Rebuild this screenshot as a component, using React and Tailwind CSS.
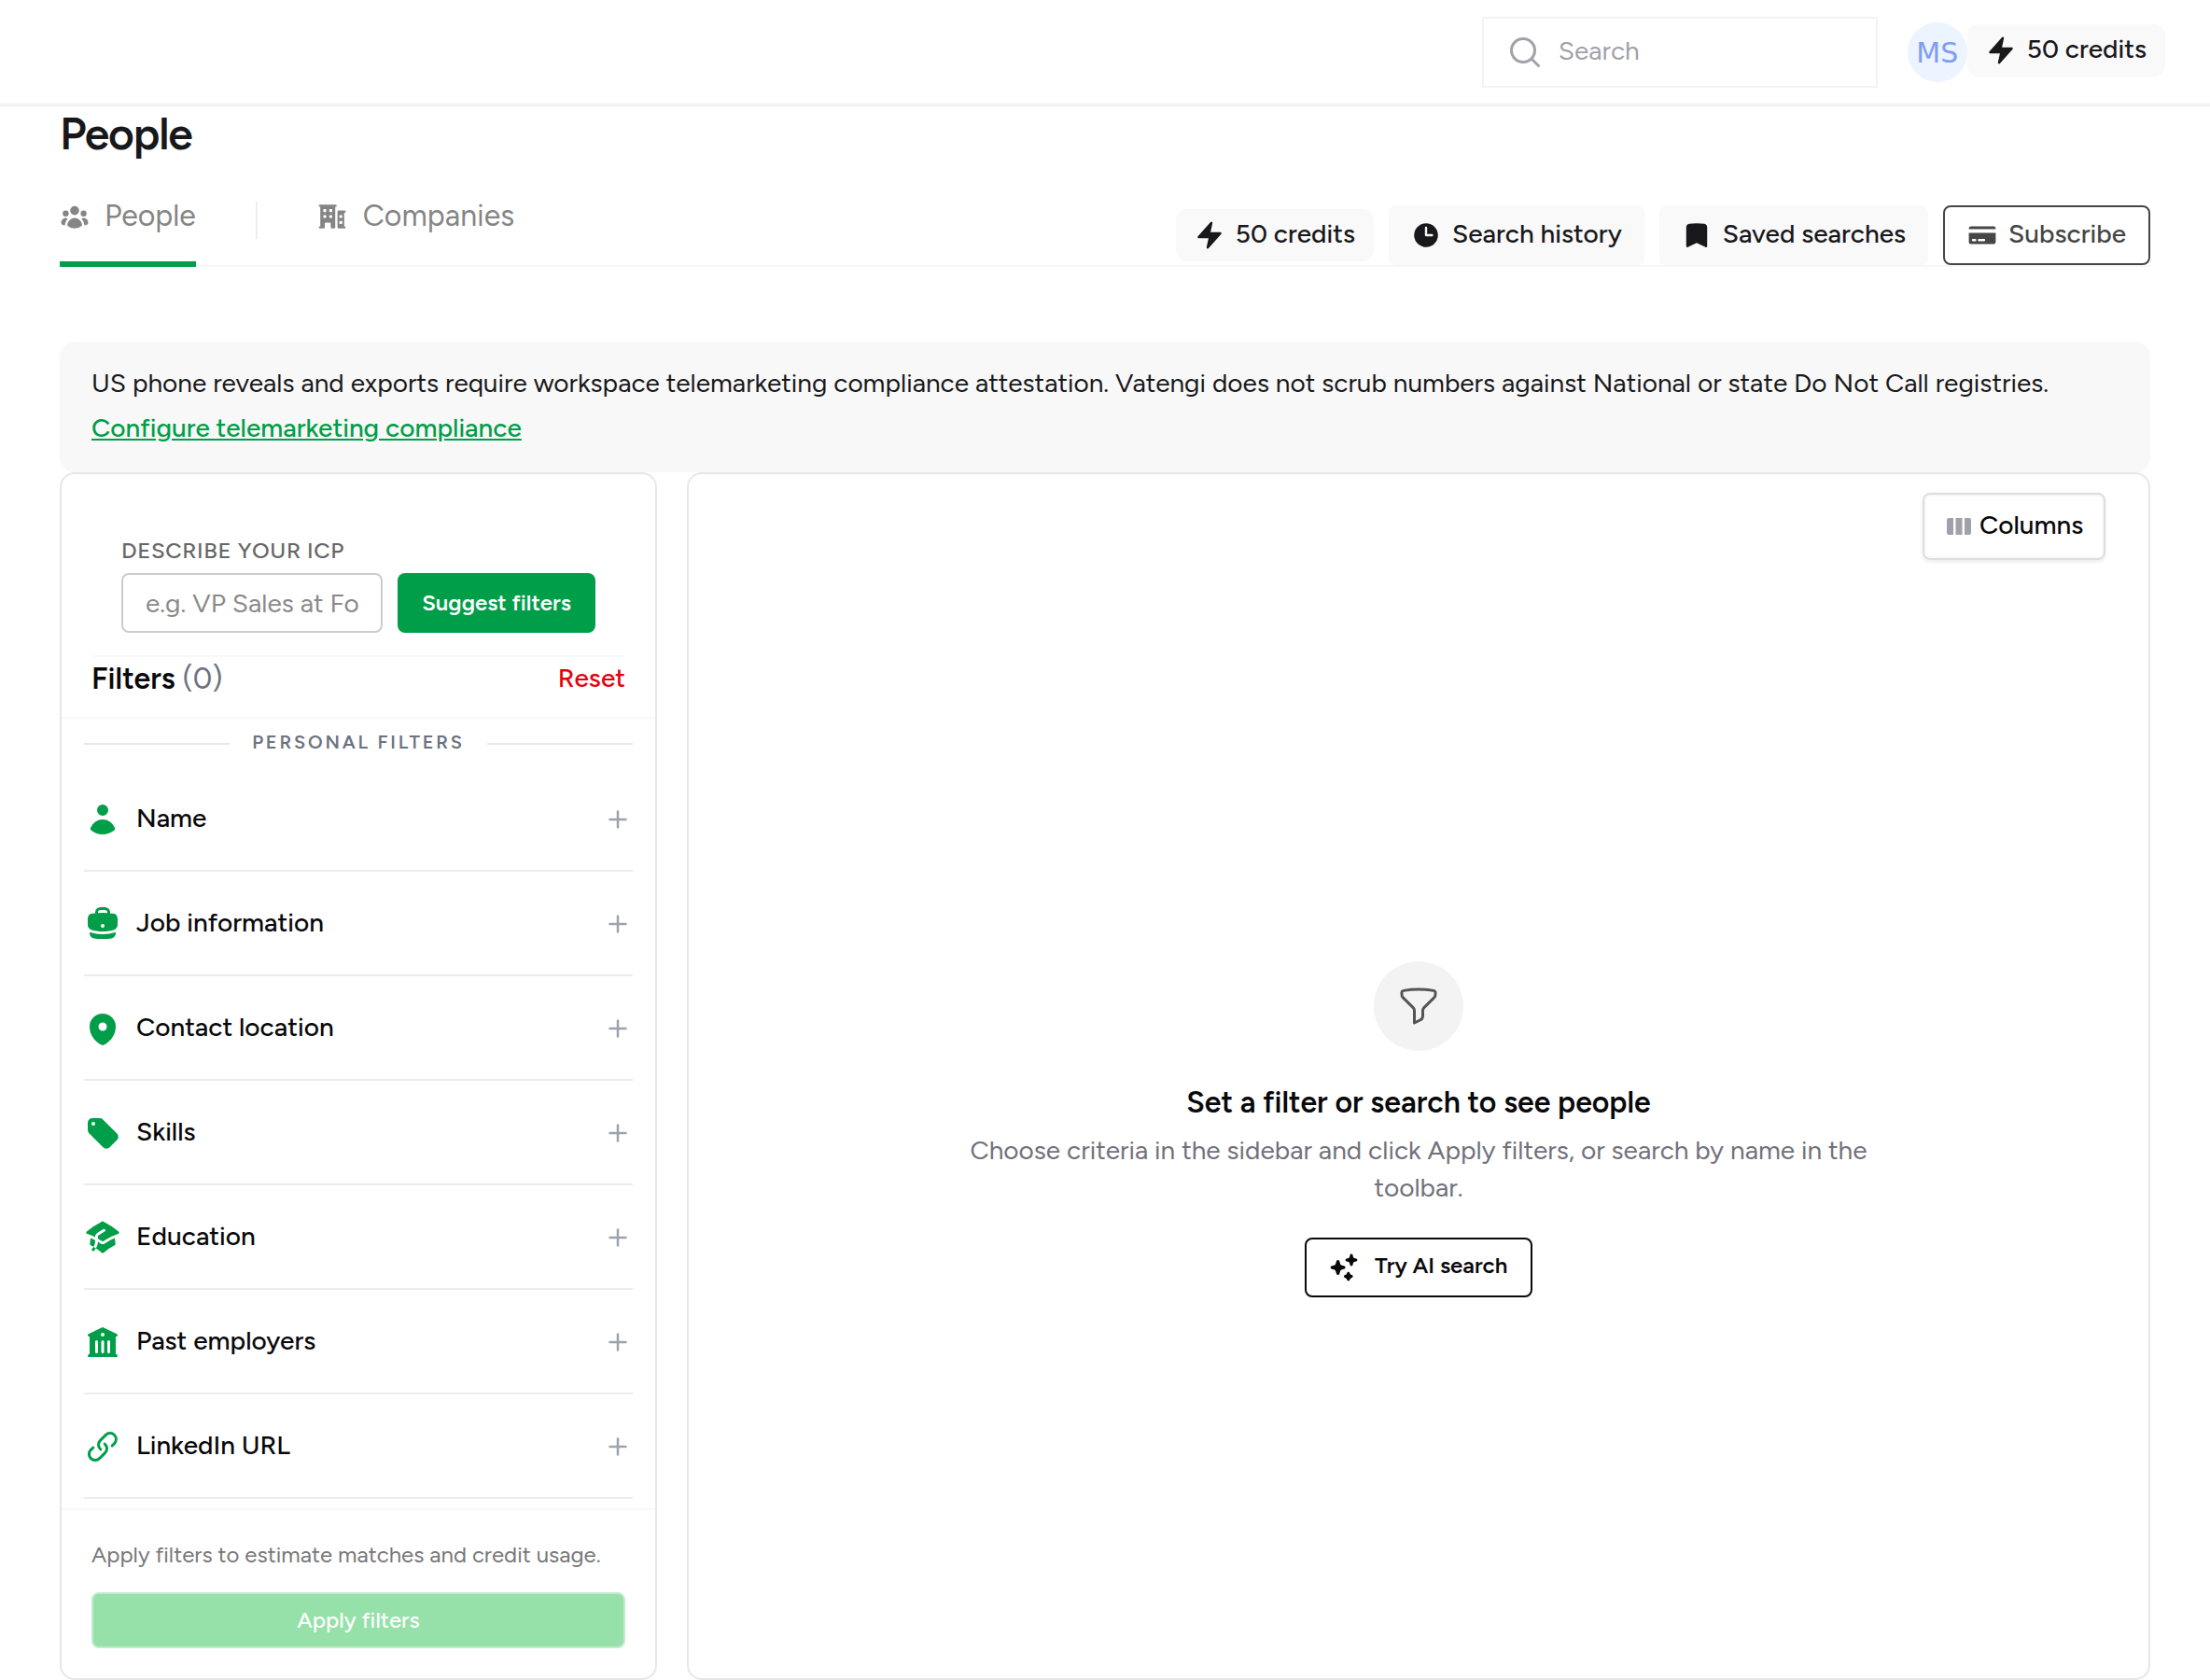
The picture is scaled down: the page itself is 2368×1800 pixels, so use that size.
import React, { useState } from "react";
import {
  HiMiniAcademicCap,
  HiMiniBolt,
  HiMiniBookmark,
  HiMiniBriefcase,
  HiMiniBuildingLibrary,
  HiMiniBuildingOffice2,
  HiMiniClock,
  HiMiniCreditCard,
  HiMiniLink,
  HiMiniMapPin,
  HiMiniSparkles,
  HiMiniTag,
  HiMiniUser,
  HiMiniUserGroup,
  HiOutlineFunnel,
} from "react-icons/hi2";

const filters = [
  { label: "Name", icon: HiMiniUser },
  { label: "Job information", icon: HiMiniBriefcase },
  { label: "Contact location", icon: HiMiniMapPin },
  { label: "Skills", icon: HiMiniTag },
  { label: "Education", icon: HiMiniAcademicCap },
  { label: "Past employers", icon: HiMiniBuildingLibrary },
  { label: "LinkedIn URL", icon: HiMiniLink },
];

const CreditsBadge = () => (
  <div className="flex h-14 items-center gap-3 rounded-xl bg-[#f9f9f9] px-5 text-[28px] leading-[40px] font-medium text-[#18181b]">
    <HiMiniBolt className="size-8" />
    <span className="-mt-[5px]">50 credits</span>
  </div>
);

const Header = () => (
  <header className="flex h-[114px] items-start justify-end border-b-2 border-[#f1f1f1] pr-12 shadow-[inset_0_-2px_0_#f6f6f6]">
    <div className="mt-[18px] flex h-[76px] w-[424px] items-center border-2 border-[#f3f3f4] pl-7">
      <svg viewBox="0 0 32 32" className="size-8" fill="none" stroke="#a1a1aa" strokeWidth="3" strokeLinecap="round">
        <circle cx="14" cy="14" r="12.5" />
        <path d="M23 23l7.5 7.5" />
      </svg>
      <span className="-mt-[5px] ml-5 text-[28px] leading-[40px] text-[#a1a1aa]">Search</span>
    </div>
    <div className="mt-6 ml-8 flex size-16 items-center justify-center rounded-full bg-[#ebf4ff] pt-0.5 font-['DejaVu_Sans',sans-serif] text-[30px] leading-none text-[#7f9cf5]">
      MS
    </div>
    <div className="mt-[26px]">
      <CreditsBadge />
    </div>
  </header>
);

const Tabs = () => (
  <div className="mt-[38px] flex h-[84px] items-start justify-between border-b-2 border-[#f7f7f7]">
    <div className="flex text-[32px] leading-[48px] text-[#858585]">
      <div className="flex h-[84px] items-start gap-4 border-b-[6px] border-[#009e49]">
        <HiMiniUserGroup className="mt-[14px] size-8" />
        <span className="mt-[5px]">People</span>
      </div>
      <div className="mx-16 mt-[14px] h-10 w-0.5 bg-[#eeeeee]" />
      <div className="flex h-[84px] items-start gap-4">
        <HiMiniBuildingOffice2 className="mt-[14px] size-8" />
        <span className="mt-[5px] ml-px tracking-[0.1px]">Companies</span>
      </div>
    </div>
    <div className="mt-[18px] flex items-center gap-4 text-[28px] leading-[40px] font-medium text-[#18181b]">
      <CreditsBadge />
      <button className="flex h-16 items-center gap-3 rounded-lg bg-[#f9f9f9] px-6">
        <HiMiniClock className="size-8" />
        <span className="-mt-[5px]">Search history</span>
      </button>
      <button className="flex h-16 items-center gap-3 rounded-lg bg-[#f9f9f9] px-6">
        <HiMiniBookmark className="size-8" />
        <span className="-mt-[5px]">Saved searches</span>
      </button>
      <button className="flex h-16 items-center gap-3 rounded-lg border-2 border-[#464646] px-6 text-[#464646]">
        <HiMiniCreditCard className="size-8" />
        <span className="-mt-[5px]">Subscribe</span>
      </button>
    </div>
  </div>
);

const FilterRow = ({ label, icon: Icon }) => (
  <button className="flex h-28 w-full items-center border-b-2 border-[#ebebf0] text-left">
    <Icon className="mt-0.5 size-10 text-[#009e49]" />
    <span className="-mt-[3px] ml-4 flex-1 text-[28px] leading-[40px] font-medium text-[#09090b]">{label}</span>
    <svg viewBox="0 0 20 20" className="mt-0.5 mr-[6px] size-5" fill="none" stroke="#9ca3af" strokeWidth="2.5" strokeLinecap="round">
      <path d="M10 1.5v17M1.5 10h17" />
    </svg>
  </button>
);

const Sidebar = () => {
  const [icp, setIcp] = useState("");

  return (
    <aside className="flex w-[640px] flex-col rounded-2xl border-2 border-[#e6e6ec]">
      <div className="mx-8 h-[196px] border-b-2 border-[#f8f8f8] px-8 pt-[66px]">
        <div className="text-[24px] leading-[32px] font-medium tracking-[0.025em] text-[#666666]">DESCRIBE YOUR ICP</div>
        <div className="mt-2 flex gap-4">
          <input
            value={icp}
            onChange={(e) => setIcp(e.target.value)}
            placeholder="e.g. VP Sales at Fo"
            className="h-16 w-[280px] rounded-lg border-2 border-[#cccccc] px-6 text-[28px] placeholder:text-[#8a8a8a]"
          />
          <button className="h-16 w-[212px] rounded-lg bg-[#009e49] text-[24px] font-semibold text-white">Suggest filters</button>
        </div>
      </div>
      <div className="flex h-[66px] items-start justify-between border-b-2 border-[#f8f8f8] px-8">
        <h2 className="-mt-px text-[32px] leading-[48px] font-semibold text-[#09090b]">
          Filters <span className="font-normal text-[#6b7280]">(0)</span>
        </h2>
        <button className="mt-0.5 text-[28px] leading-[40px] font-medium text-[#e7000b]">Reset</button>
      </div>
      <div className="h-[846px] px-6">
        <div className="flex h-[52px] items-center gap-6">
          <div className="mt-0.5 h-0.5 flex-1 bg-[#e6e6ec]" />
          <span className="-mt-0.5 text-[20px] leading-[28px] font-semibold tracking-[2.8px] text-[#6b7280]">PERSONAL FILTERS</span>
          <div className="mt-0.5 h-0.5 flex-1 bg-[#e6e6ec]" />
        </div>
        {filters.map((f) => (
          <FilterRow key={f.label} label={f.label} icon={f.icon} />
        ))}
      </div>
      <div className="border-t-2 border-[#f8f8f8] px-8">
        <p className="mt-8 text-[24px] leading-[32px] text-[#777777]">Apply filters to estimate matches and credit usage.</p>
        <button className="mt-6 h-[60px] w-full rounded-lg border-2 border-[#c3e9ce] bg-[#95e1a9] text-[24px] font-medium text-white">
          Apply filters
        </button>
      </div>
    </aside>
  );
};

const Results = () => (
  <section className="flex flex-1 flex-col rounded-2xl border-2 border-[#e6e6ec]">
    <div className="flex justify-end pt-5 pr-[46px]">
      <button className="flex h-[72px] w-[196px] items-center rounded-lg border-2 border-[#dedede] pl-6 shadow-[0_2px_4px_rgba(0,0,0,0.08),inset_0_0_0_2px_#f8f8f8]">
        <svg viewBox="0 0 26 18" className="h-[18px] w-[26px] fill-[#a1a1aa]">
          <path d="M2 0h5v18H2a2 2 0 01-2-2V2a2 2 0 012-2zM9.5 0h7v18h-7zM19 0h5a2 2 0 012 2v14a2 2 0 01-2 2h-5z" />
        </svg>
        <span className="-mt-[5px] ml-[9px] text-[28px] font-medium text-[#09090b]">Columns</span>
      </button>
    </div>
    <div className="mt-[430px] flex flex-col items-center text-center">
      <div className="flex size-24 items-center justify-center rounded-full bg-[#f3f3f3]">
        <HiOutlineFunnel className="size-12 text-[#555555]" />
      </div>
      <h3 className="mt-[31px] text-[32px] leading-[48px] font-semibold text-[#09090b]">Set a filter or search to see people</h3>
      <p className="mt-[7px] w-[1024px] text-[28px] leading-[40px] text-[#71717a]">
        Choose criteria in the sidebar and click Apply filters, or search by name in the toolbar.
      </p>
      <button className="mt-[34px] flex h-16 w-[244px] items-center gap-[17px] rounded-lg border-2 border-[#09090b] pl-6 text-[24px] font-semibold text-[#09090b]">
        <HiMiniSparkles className="size-8" />
        <span className="-mt-[4px]">Try AI search</span>
      </button>
    </div>
  </section>
);

export default function App() {
  return (
    <div className="h-[1800px] w-[2368px] overflow-hidden bg-white font-[Figtree,Lato,sans-serif]">
      <Header />
      <main className="px-16">
        <h1 className="-mt-px h-[51px] pt-[2px] text-[48px] leading-[56px] font-semibold tracking-tight text-[#18181b]">People</h1>
        <Tabs />
        <div className="mt-20 h-[140px] rounded-2xl bg-[#f8f8f8] px-[34px] pt-6 text-[28px] leading-[40px] text-[#18181b]">
          <p>
            US phone reveals and exports require workspace telemarketing compliance attestation. Vatengi does not scrub
            numbers against National or state Do Not Call registries.
          </p>
          <a href="#" className="mt-2 inline-block font-medium text-[#009e49] underline">
            Configure telemarketing compliance
          </a>
        </div>
        <div className="flex h-[1294px] gap-8">
          <Sidebar />
          <Results />
        </div>
      </main>
    </div>
  );
}
